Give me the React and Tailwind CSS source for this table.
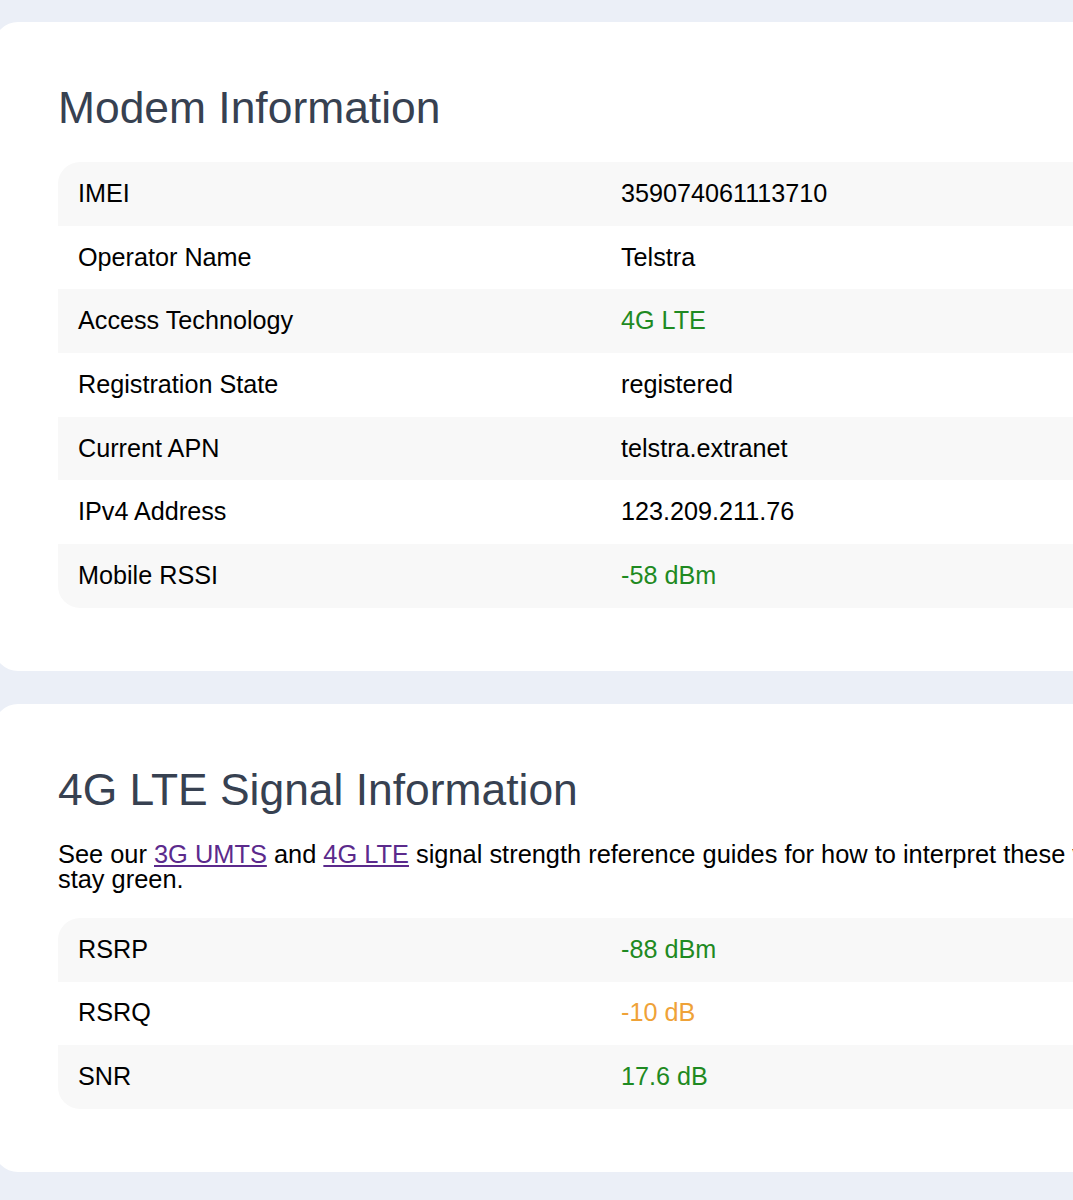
const modemRows = [
  { label: "IMEI", value: "359074061113710" },
  { label: "Operator Name", value: "Telstra" },
  { label: "Access Technology", value: "4G LTE", tone: "good" },
  { label: "Registration State", value: "registered" },
  { label: "Current APN", value: "telstra.extranet" },
  { label: "IPv4 Address", value: "123.209.211.76" },
  { label: "Mobile RSSI", value: "-58 dBm", tone: "good" },
];

const signalRows = [
  { label: "RSRP", value: "-88 dBm", tone: "good" },
  { label: "RSRQ", value: "-10 dB", tone: "warn" },
  { label: "SNR", value: "17.6 dB", tone: "good" },
];

function toneClass(tone) {
  if (tone === "good") return "text-[#1f8a22]";
  if (tone === "warn") return "text-[#efa238]";
  return "text-black";
}

function InfoTable({ rows }) {
  return (
    <div className="w-[1126px] rounded-[22px] overflow-hidden">
      {rows.map((row, i) => (
        <div
          key={row.label}
          className={`grid grid-cols-[563px_563px] h-[63.7px] items-center text-[25.2px] ${
            i % 2 === 0 ? "bg-[#f8f8f8]" : "bg-white"
          }`}
        >
          <div className="pl-[20px] text-black">{row.label}</div>
          <div className={toneClass(row.tone)}>{row.value}</div>
        </div>
      ))}
    </div>
  );
}

function Card({ title, children }) {
  return (
    <section className="ml-[-6px] w-[1248px] bg-white rounded-[24px] pl-[64px] pt-[61px] pb-[63px]">
      <h2 className="text-[44.4px] leading-[50px] text-[#374151] mb-[29px]">{title}</h2>
      {children}
    </section>
  );
}

export default function App() {
  return (
    <div
      className="w-[1073px] h-[1200px] overflow-hidden bg-[#ebeff7] pt-[22px] flex flex-col gap-[33px]"
      style={{ fontFamily: '"Liberation Sans", Arial, sans-serif' }}
    >
      <Card title="Modem Information">
        <InfoTable rows={modemRows} />
      </Card>
      <Card title="4G LTE Signal Information">
        <p className="text-[25.4px] leading-[25px] text-black -mt-[2px] mb-[26px] w-[1500px]">
          See our{" "}
          <a href="#" className="text-[#5b2a8c] underline">
            3G UMTS
          </a>{" "}
          and{" "}
          <a href="#" className="text-[#5b2a8c] underline">
            4G LTE
          </a>{" "}
          signal strength reference guides for how to interpret these values, aim to have them all
          <br />
          stay green.
        </p>
        <InfoTable rows={signalRows} />
      </Card>
    </div>
  );
}
